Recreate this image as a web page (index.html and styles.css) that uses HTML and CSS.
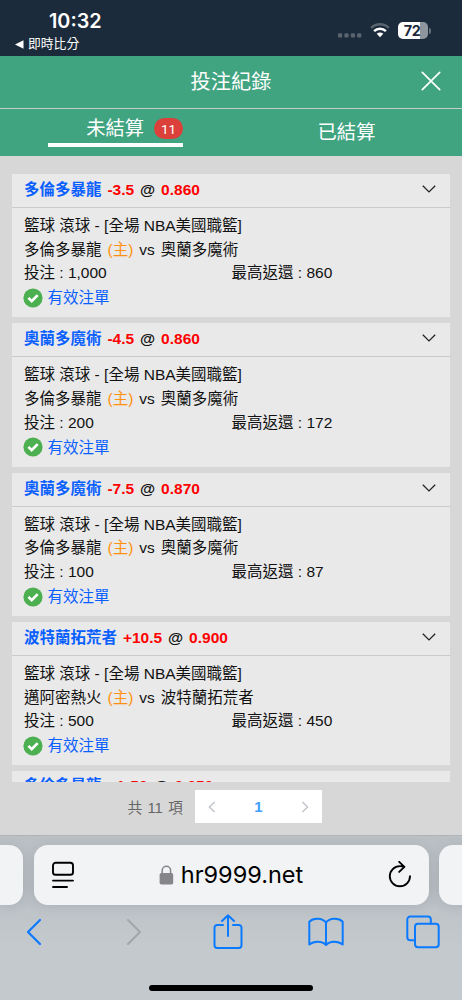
FILE: index.html
```html
<!DOCTYPE html>
<html lang="zh-Hant">
<head>
<meta charset="utf-8">
<meta name="viewport" content="width=device-width, initial-scale=1">
<title>投注紀錄</title>
<link rel="stylesheet" href="styles.css">
</head>
<body>
<div class="phone">
  <header class="status">
    <div class="status-left">
      <div class="clock">10:32</div>
      <div class="back-app"><svg width="9" height="9" viewBox="0 0 9 9"><path d="M0 4.5 8.5 .3v8.4z" fill="#fff"/></svg><span>即時比分</span></div>
    </div>
    <div class="status-right">
      <svg class="signal" width="24" height="5" viewBox="0 0 24 5" fill="#59646f"><rect x="0" y=".3" width="4.2" height="4.2" rx="1.2"/><rect x="6.4" y=".3" width="4.2" height="4.2" rx="1.2"/><rect x="12.8" y=".3" width="4.2" height="4.2" rx="1.2"/><rect x="19.1" y=".3" width="4.2" height="4.2" rx="1.2"/></svg>
      <svg class="wifi" width="20" height="16" viewBox="0 0 20 16" fill="none"><path d="M1.2 5.9a12.6 12.6 0 0 1 17.6 0" stroke="#59646f" stroke-width="2.5"/><path d="M4.1 9.1a8.4 8.4 0 0 1 11.8 0" stroke="#fff" stroke-width="2.5"/><path d="M6.7 11.8a4.7 4.7 0 0 1 6.6 0L10 15.2z" fill="#fff"/></svg>
      <div class="battery">72</div><i class="battery-tip"></i>
    </div>
  </header>

  <div class="titlebar">
    <h1>投注紀錄</h1>
    <svg class="close" width="20" height="20" viewBox="0 0 20 20"><path d="M1.3 1.3l17.4 17.4M18.7 1.3L1.3 18.7" stroke="#fff" stroke-width="1.7" stroke-linecap="round"/></svg>
  </div>
  <nav class="tabs">
    <div class="tab"><div class="tab-active"><span>未結算</span><b class="badge">11</b></div></div>
    <div class="tab"><span class="tab-idle">已結算</span></div>
  </nav>

  <main class="content">
    <div class="list">
      <section class="card">
        <div class="card-head"><span class="team">多倫多暴龍</span> <span class="odds">-3.5</span> @ <span class="odds">0.860</span><svg class="chev" width="14" height="8" viewBox="0 0 14 8"><path d="M.8.8 7 6.9 13.2.8"/></svg></div>
        <div class="card-body">
          <p>籃球 滾球 - [全場 NBA美國職籃]</p>
          <p class="match">多倫多暴龍 <span class="home">(主)</span> vs 奧蘭多魔術</p>
          <p class="cols"><span>投注 : 1,000</span><span>最高返還 : 860</span></p>
          <p class="valid"><svg width="20" height="20" viewBox="0 0 20 20"><circle cx="10" cy="10" r="9.6" fill="#4caf50"/><path d="M5.4 9.9l3.3 3.2 6-6" fill="none" stroke="#fff" stroke-width="2.7"/></svg>有效注單</p>
        </div>
      </section>
      <section class="card">
        <div class="card-head"><span class="team">奧蘭多魔術</span> <span class="odds">-4.5</span> @ <span class="odds">0.860</span><svg class="chev" width="14" height="8" viewBox="0 0 14 8"><path d="M.8.8 7 6.9 13.2.8"/></svg></div>
        <div class="card-body">
          <p>籃球 滾球 - [全場 NBA美國職籃]</p>
          <p class="match">多倫多暴龍 <span class="home">(主)</span> vs 奧蘭多魔術</p>
          <p class="cols"><span>投注 : 200</span><span>最高返還 : 172</span></p>
          <p class="valid"><svg width="20" height="20" viewBox="0 0 20 20"><circle cx="10" cy="10" r="9.6" fill="#4caf50"/><path d="M5.4 9.9l3.3 3.2 6-6" fill="none" stroke="#fff" stroke-width="2.7"/></svg>有效注單</p>
        </div>
      </section>
      <section class="card">
        <div class="card-head"><span class="team">奧蘭多魔術</span> <span class="odds">-7.5</span> @ <span class="odds">0.870</span><svg class="chev" width="14" height="8" viewBox="0 0 14 8"><path d="M.8.8 7 6.9 13.2.8"/></svg></div>
        <div class="card-body">
          <p>籃球 滾球 - [全場 NBA美國職籃]</p>
          <p class="match">多倫多暴龍 <span class="home">(主)</span> vs 奧蘭多魔術</p>
          <p class="cols"><span>投注 : 100</span><span>最高返還 : 87</span></p>
          <p class="valid"><svg width="20" height="20" viewBox="0 0 20 20"><circle cx="10" cy="10" r="9.6" fill="#4caf50"/><path d="M5.4 9.9l3.3 3.2 6-6" fill="none" stroke="#fff" stroke-width="2.7"/></svg>有效注單</p>
        </div>
      </section>
      <section class="card">
        <div class="card-head"><span class="team">波特蘭拓荒者</span> <span class="odds">+10.5</span> @ <span class="odds">0.900</span><svg class="chev" width="14" height="8" viewBox="0 0 14 8"><path d="M.8.8 7 6.9 13.2.8"/></svg></div>
        <div class="card-body">
          <p>籃球 滾球 - [全場 NBA美國職籃]</p>
          <p class="match">邁阿密熱火 <span class="home">(主)</span> vs 波特蘭拓荒者</p>
          <p class="cols"><span>投注 : 500</span><span>最高返還 : 450</span></p>
          <p class="valid"><svg width="20" height="20" viewBox="0 0 20 20"><circle cx="10" cy="10" r="9.6" fill="#4caf50"/><path d="M5.4 9.9l3.3 3.2 6-6" fill="none" stroke="#fff" stroke-width="2.7"/></svg>有效注單</p>
        </div>
      </section>
      <section class="card">
        <div class="card-head last"><span class="team">多倫多暴龍</span> <span class="odds">+1-50</span> @ <span class="odds">0.950</span></div>
      </section>
    </div>
    <div class="pager">
      <span class="total">共 11 項</span>
      <div class="pages">
        <svg width="8" height="12" viewBox="0 0 8 12"><path d="M6.6 1 1.4 6l5.2 5"/></svg>
        <b>1</b>
        <svg width="8" height="12" viewBox="0 0 8 12"><path d="M1.4 1l5.2 5-5.2 5"/></svg>
      </div>
    </div>
  </main>

  <footer class="browser">
    <div class="address-row">
      <div class="side-tab side-left"></div>
      <div class="address">
        <svg width="24" height="28" viewBox="0 0 24 28" fill="none" stroke="#000" stroke-width="1.9" stroke-linecap="round"><rect x="2" y="1.8" width="20" height="12" rx="2.6"/><path d="M2 19.6h20M2 26h14"/></svg>
        <div class="url"><svg width="15" height="20" viewBox="0 0 15 20"><rect x=".6" y="8" width="13.6" height="11.6" rx="1.8" fill="#85858a"/><path d="M3.2 9V5.4a4.2 4.2 0 0 1 8.4 0V9" fill="none" stroke="#85858a" stroke-width="1.5"/></svg><span>hr9999.net</span></div>
        <svg width="24" height="28" viewBox="0 0 24 28" fill="none" stroke="#000" stroke-width="1.9" stroke-linecap="round" stroke-linejoin="round"><path d="M23 15.2A10.100 10.100 0 1 1 12.900 5.100c1.600 0 3 .2 4.200.6M12.200.900l5.200 5-5.200 5"/></svg>
      </div>
      <div class="side-tab side-right"></div>
    </div>
    <div class="tools">
      <svg width="16" height="28" viewBox="0 0 16 28"><path d="M14 2 2 14l12 12" stroke-width="2.2"/></svg>
      <svg class="off" width="16" height="28" viewBox="0 0 16 28"><path d="M2 2l12 12L2 26" stroke-width="2"/></svg>
      <svg width="30" height="36" viewBox="0 0 30 36"><path d="M10 11H4.200A2.700 2.700 0 0 0 1.500 13.700v17.600A2.700 2.700 0 0 0 4.200 34h21.600a2.700 2.700 0 0 0 2.700-2.700V13.700A2.700 2.700 0 0 0 25.800 11H20M15 22V1.500M9 7l6-5.700L21 7"/></svg>
      <svg width="36" height="30" viewBox="0 0 36 30"><path d="M18 5.500C14.500.8 5.500.4 1.300 4.700v22.800c4.500-3.800 13-3.800 16.700.5 3.700-4.300 12.200-4.300 16.700-.5V4.700C30.500.4 21.500.8 18 5.500V28"/></svg>
      <svg width="34" height="34" viewBox="0 0 34 34"><rect x="9" y="8.700" width="23.700" height="23.500" rx="3"/><path d="M9 25.200H4.300a3 3 0 0 1-3-3V4.500a3 3 0 0 1 3-3h17.500a3 3 0 0 1 3 3V8.700"/></svg>
    </div>
    <div class="home-bar"></div>
  </footer>
</div>
</body>
</html>
```

FILE: styles.css
```css
* { box-sizing: border-box; }
body { margin: 0; font-family: "Liberation Sans", "Noto Sans CJK TC", sans-serif; }
h1, p { margin: 0; font-weight: 400; }
svg { display: block; flex: none; }
.phone { width: 462px; height: 1000px; overflow: hidden; display: flex; flex-direction: column; background: #d7d7d7; }

.status { height: 56px; flex: none; background: #1c2b3b; color: #fff; display: flex; justify-content: space-between; padding: 9px 31px 0 15px; }
.clock { font: 600 19.800px/25px Inter, sans-serif; padding-left: 34px; }
.back-app { display: flex; align-items: center; gap: 4px; font-size: 12.800px; line-height: 20px; }
.status-right { display: flex; align-items: flex-start; padding-top: 13px; }
.signal { margin-top: 11px; }
.wifi { margin: 0 8px 0 8px; }
.battery { width: 30px; height: 17px; border-radius: 5px; background: linear-gradient(90deg, #fff 72%, #8e959d 72%); color: #1c2b3b; font: 700 14.300px/17px Inter, sans-serif; text-align: center; letter-spacing: -.3px; padding-right: 2px; }
.battery-tip { width: 2px; height: 6px; margin: 6px 0 0 1px; border-radius: 0 2px 2px 0; background: #65707a; }

.titlebar { height: 53px; flex: none; background: #41a481; border-bottom: 1px solid #c4cdc8; display: grid; grid-template-columns: 1fr auto 1fr; align-items: center; color: #fff; padding-right: 21px; padding-left: 21px; }
.titlebar h1 { grid-column: 2; font-size: 20.200px; line-height: 30px; }
.close { justify-self: end; margin-bottom: 2px; }
.tabs { height: 47px; flex: none; display: grid; grid-template-columns: 1fr 1fr; background: #41a481; color: #fff; font-size: 19.300px; line-height: 28px; }
.tab { display: flex; justify-content: center; align-items: flex-start; }
.tab-active { width: 135px; height: 38px; border-bottom: 4px solid #fff; display: flex; justify-content: flex-end; gap: 10px; padding-top: 6px; }
.tab-idle { padding-top: 10px; }
.badge { width: 29px; height: 21px; margin-top: 3px; border-radius: 11px; background: #db403b; font: 400 13.500px/22px Roboto, sans-serif; text-align: center; }

.content { height: 679px; flex: none; padding: 18px 12px 0; }
.list { height: 608px; overflow: hidden; font-size: 15.500px; color: #111; }
.card { height: 143.300px; margin-bottom: 6px; background: #e9e9e9; }
.card-head { height: 34px; border-bottom: 1px solid #cbcbcb; padding: 0 12px; line-height: 32px; font-weight: 700; position: relative; white-space: pre; word-spacing: 1.600px; }
.last { line-height: 30px; }
.team { color: #0a60ff; }
.odds { color: #f00; }
.chev { position: absolute; right: 14px; top: 11px; fill: none; stroke: #222; stroke-width: 1.300; }
.card-body { padding: 6px 12px 0; line-height: 23.700px; }
.match { word-spacing: 1.700px; }
.home { color: #ff9110; }
.cols { display: grid; grid-template-columns: 207.500px 1fr; }
.valid { color: #0a60ff; display: flex; align-items: center; gap: 4.500px; height: 26px; margin-left: -1px; }

.pager { display: flex; align-items: center; padding: 8px 0 0 115.500px; gap: 12px; font-size: 14.800px; color: #666; }
.total { width: 55.500px; white-space: nowrap; word-spacing: 1px; }
.pages { display: flex; align-items: center; justify-content: space-between; width: 127px; height: 33px; padding: 0 13px; background: #fff; }
.pages svg { fill: none; stroke: #bfc3cb; stroke-width: 1.400; }
.pages b { color: #409eff; font-size: 15px; }

.browser { height: 165px; flex: none; background: linear-gradient(#bbc0c5, #b6bcc1 50px, #bfc4c9 75px, #c4c9ce 110px); border-top: 1px solid #b0b4b8; }
.address-row { display: grid; grid-template-columns: 23px 395px 23px; gap: 10.500px; padding-top: 9px; }
.address, .side-tab { height: 60px; background: #f2f3f5; border-radius: 14px; box-shadow: 0 2px 12px rgba(80, 90, 100, .14); }
.side-left { border-radius: 0 14px 14px 0; }
.side-right { border-radius: 14px 0 0 14px; width: 30px; }
.address { display: flex; align-items: center; justify-content: space-between; padding: 0 17px; }
.url { display: flex; align-items: center; gap: 7px; font: 400 23.500px/30px Inter, sans-serif; color: #000; }
.tools { display: grid; grid-template-columns: repeat(5, 97.200px); justify-items: center; align-items: center; height: 36px; margin: 9px 0 0 -14.500px; }
.tools svg { fill: none; stroke: #0a7aff; stroke-width: 2; stroke-linecap: round; stroke-linejoin: round; }
.tools .off { stroke: #a2a6aa; margin-left: 5px; }
.home-bar { width: 164px; height: 6px; margin: 35px auto 0; border-radius: 3px; background: #000; }
```
